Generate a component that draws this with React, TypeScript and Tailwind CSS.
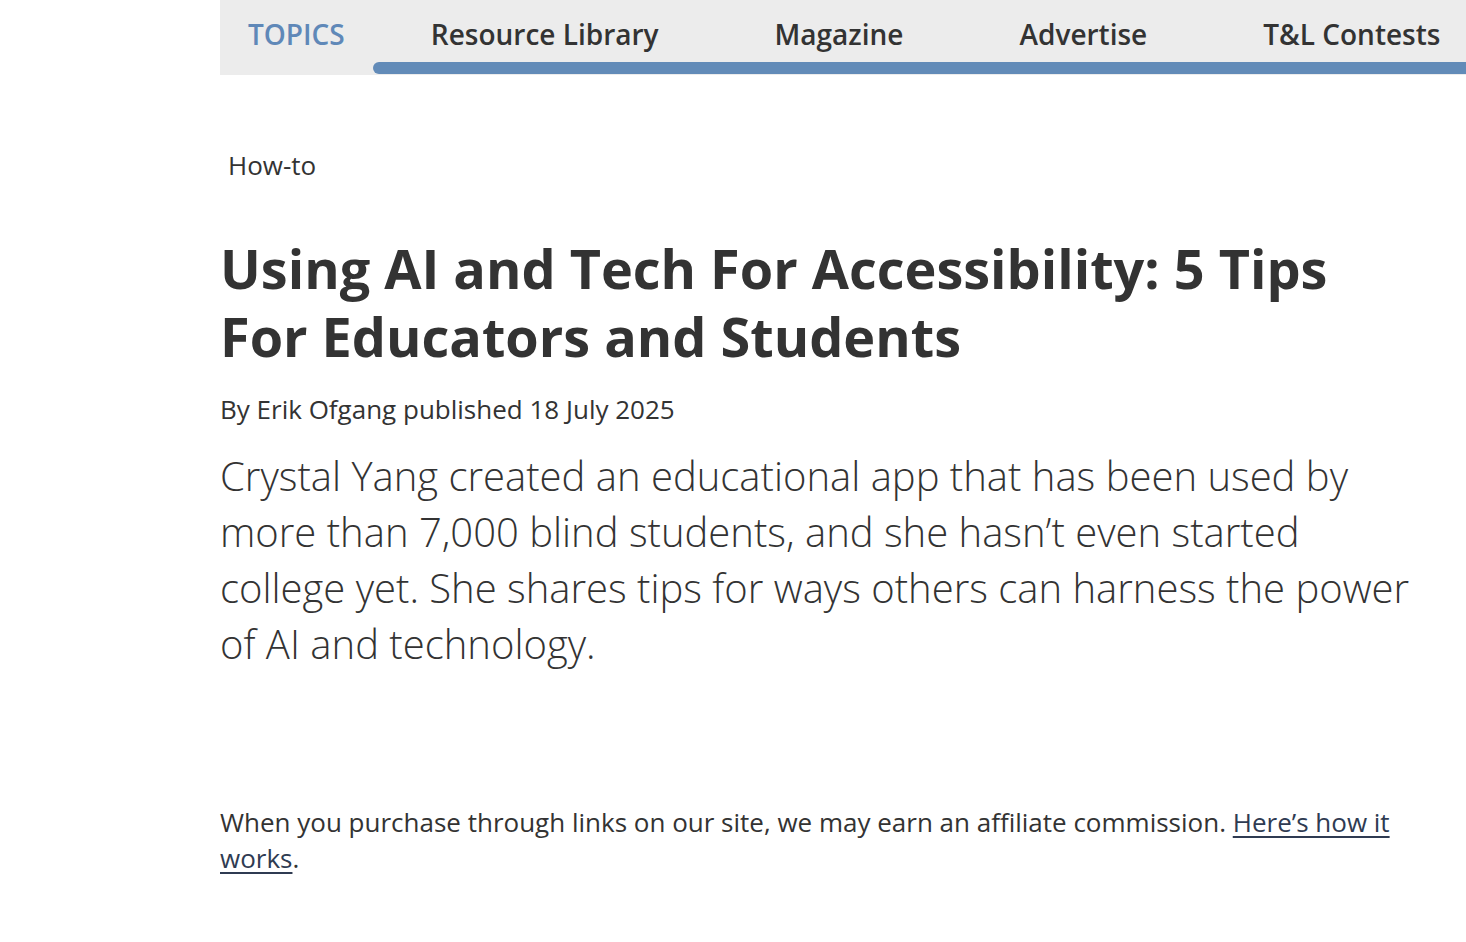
export default function App() {
    const items = ["Resource Library", "Magazine", "Advertise", "T&L Contests"];
    return (
        <div className="min-h-screen bg-white font-['Open_Sans',sans-serif] text-[#333]">
            <nav className="ml-[220px] flex h-[75px] bg-[#ececec]">
                <div className="flex h-[68px] items-center px-7">
                    <span className="text-[28px] font-semibold text-[#5f88b8]">
                        TOPICS
                    </span>
                </div>
                <div className="relative flex flex-1 items-start">
                    {items.map((item, i) => (
                        <a
                            key={i}
                            className="flex h-[68px] items-center px-[58px] text-[28px] font-semibold whitespace-nowrap text-[#333]"
                        >
                            {item}
                        </a>
                    ))}
                    <div className="absolute right-0 bottom-[1px] left-0 h-3 rounded-l-full bg-[#628bb8]" />
                </div>
            </nav>
            <main className="ml-[220px] w-[1200px]">
                <div className="pt-[74px] pl-2 text-[26px] leading-[32px]">How-to</div>
                <h1 className="mt-[53px] text-[54px] leading-[68px] font-bold">
                    Using AI and Tech For Accessibility: 5 Tips For Educators and Students
                </h1>
                <div className="mt-[22px] text-[26px] leading-[34px]">
                    By Erik Ofgang published 18 July 2025
                </div>
                <p className="mt-[22px] text-[40px] leading-[56px] font-light">
                    Crystal Yang created an educational app that has been used by more than 7,000 blind
                    students, and she hasn’t even started college yet. She shares tips for ways others can
                    harness the power of AI and technology.
                </p>
                <p className="mt-[132px] text-[26px] leading-[36px]">
                    When you purchase through links on our site, we may earn an affiliate commission.{" "}
                    <a className="text-[#2f3b52] underline underline-offset-4">Here’s how it works</a>.
                </p>
            </main>
        </div>
    );
}
